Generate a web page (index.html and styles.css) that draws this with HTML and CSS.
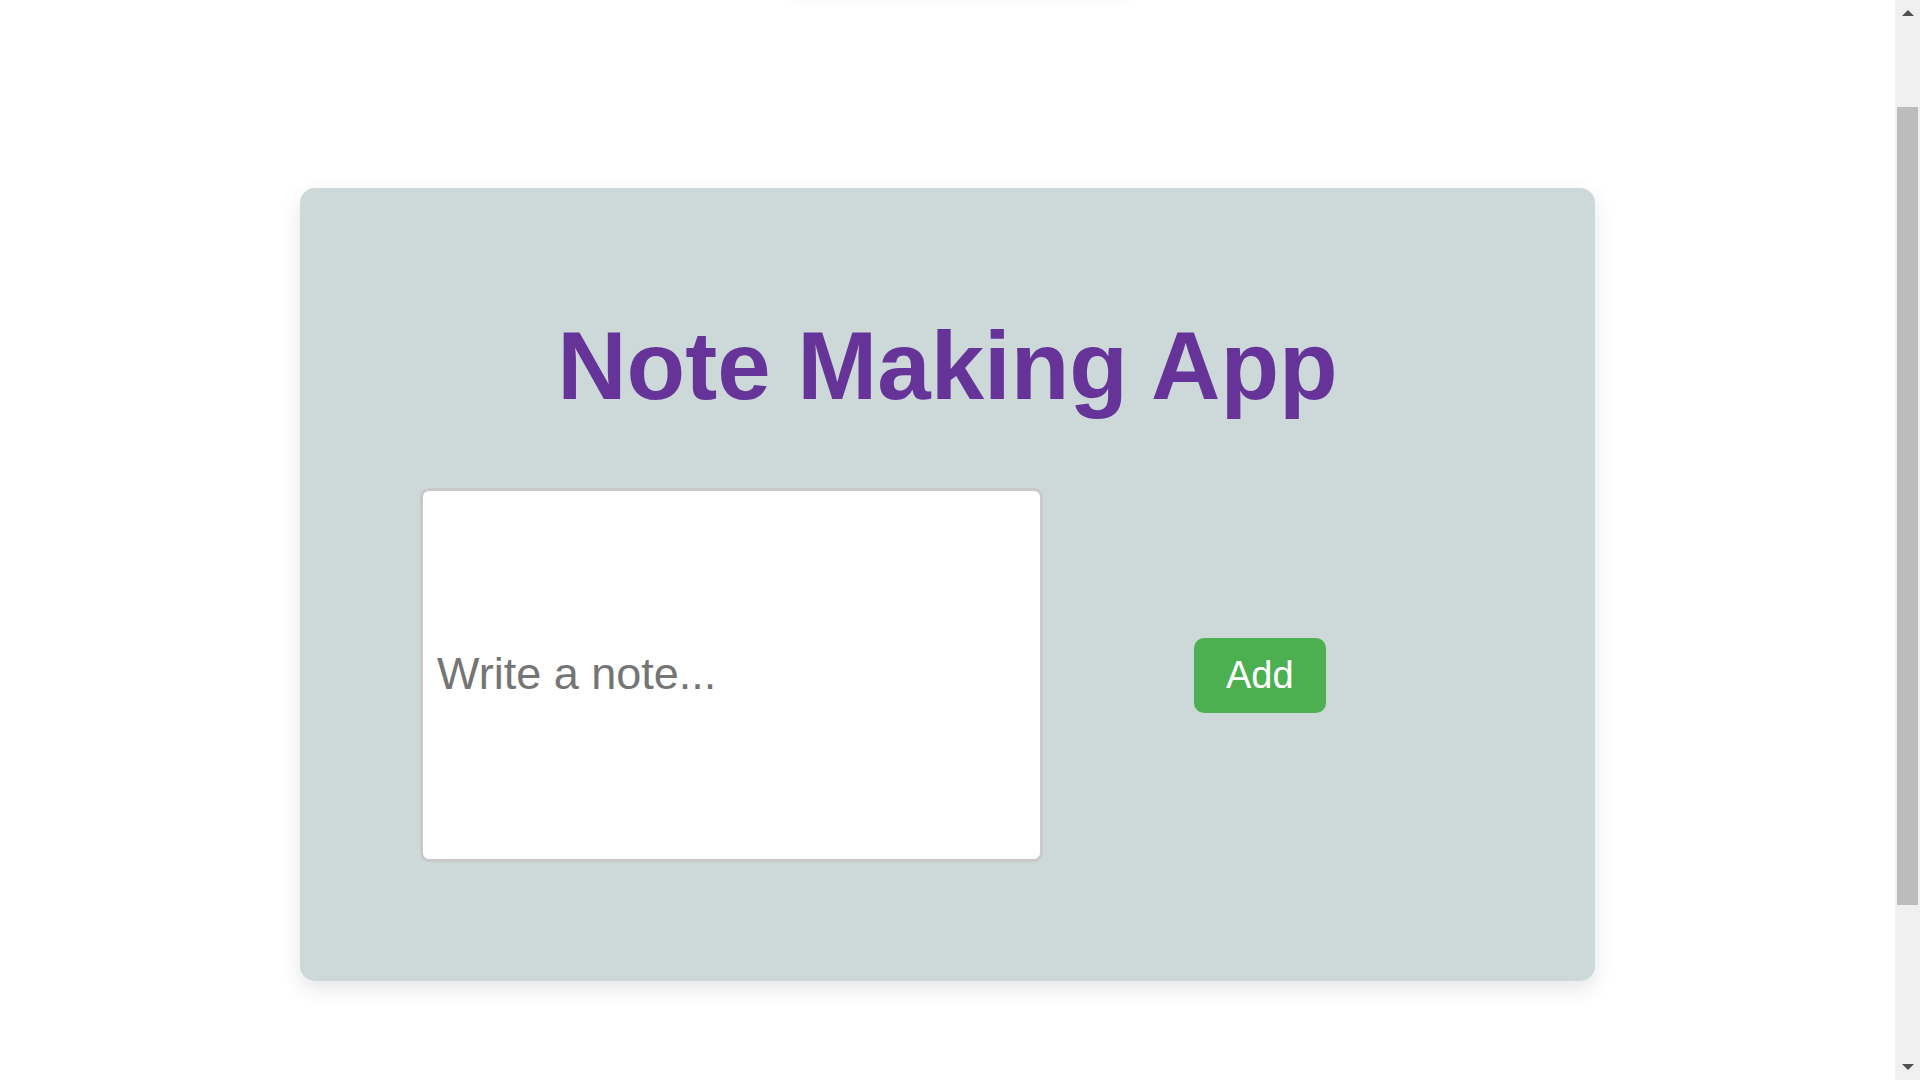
FILE: index.html
```html
<!DOCTYPE html>
<html lang="en">
<head>
<meta charset="utf-8">
<title>Note Making App</title>
<link rel="stylesheet" href="styles.css">
</head>
<body>
<div class="page">
  <div class="notes-strip"></div>
  <main class="card">
    <h1 class="title">Note Making App</h1>
    <form class="note-form" onsubmit="return false;">
      <textarea class="note-input" placeholder="Write a note..."></textarea>
      <button class="add-btn" type="submit">Add</button>
    </form>
  </main>
</div>
<div class="scrollbar" aria-hidden="true">
  <div class="sb-btn sb-up"><span class="arrow-up"></span></div>
  <div class="sb-track"><div class="sb-thumb"></div></div>
  <div class="sb-btn sb-down"><span class="arrow-down"></span></div>
</div>
<script src="script.js"></script>
</body>
</html>
```

FILE: styles.css
```css
html {
  background: #ffffff;
}
body {
  margin: 0;
  font-family: "Liberation Sans", Arial, sans-serif;
  background: #ffffff;
}
.page {
  padding-right: 25px;
}
.notes-strip {
  width: 330px;
  height: 80px;
  margin: 20px auto 0;
  background: #ffffff;
  box-shadow: 0 4px 16px rgba(0, 0, 0, 0.12);
  transform: translateX(12px);
}
.card {
  width: 1295px;
  box-sizing: border-box;
  margin: 199px auto 301px;
  padding: 123px 0 119px 120px;
  background: #cdd8d9;
  border-radius: 15px;
  box-shadow: 0 8px 20px rgba(0, 0, 0, 0.1);
}
.title {
  margin: 0 0 67px -120px;
  font-size: 96px;
  font-weight: bold;
  line-height: normal;
  color: #663399;
  text-align: center;
}
.note-form {
  display: flex;
  align-items: center;
  gap: 151px;
}
.note-input {
  box-sizing: border-box;
  width: 623px;
  height: 374px;
  padding: 157px 14px 0;
  border: 3px solid #c9c9c9;
  border-radius: 9px;
  background: #ffffff;
  font-family: "Liberation Sans", Arial, sans-serif;
  font-size: 45px;
  line-height: normal;
  color: #333333;
  resize: none;
  outline: none;
}
.note-input::placeholder {
  color: #757575;
}
.add-btn {
  padding: 16px 32px;
  border: none;
  border-radius: 10px;
  background: #4caf50;
  color: #ffffff;
  font-family: "Liberation Sans", Arial, sans-serif;
  font-size: 38px;
  line-height: normal;
  cursor: pointer;
}

/* classic scrollbar overlay */
.scrollbar {
  position: fixed;
  top: 0;
  right: 0;
  width: 25px;
  height: 100vh;
  display: flex;
  flex-direction: column;
  background: #f0f0f0;
}
.sb-btn {
  height: 25px;
  flex: none;
  display: flex;
  justify-content: center;
  align-items: flex-start;
  box-sizing: border-box;
}
.sb-up {
  padding-top: 10px;
}
.sb-down {
  padding-top: 9px;
}
.arrow-up {
  width: 0;
  height: 0;
  border-left: 6px solid transparent;
  border-right: 6px solid transparent;
  border-bottom: 6px solid #505050;
}
.arrow-down {
  width: 0;
  height: 0;
  border-left: 6px solid transparent;
  border-right: 6px solid transparent;
  border-top: 6px solid #505050;
}
.sb-track {
  flex: 1;
  padding: 82px 2px 0;
}
.sb-thumb {
  height: 798px;
  background: #bcbcbc;
}
```

FILE: script.js
```js
function scrollToView() {
  window.scrollTo(0, 111);
}
scrollToView();
window.addEventListener('load', scrollToView);
```
